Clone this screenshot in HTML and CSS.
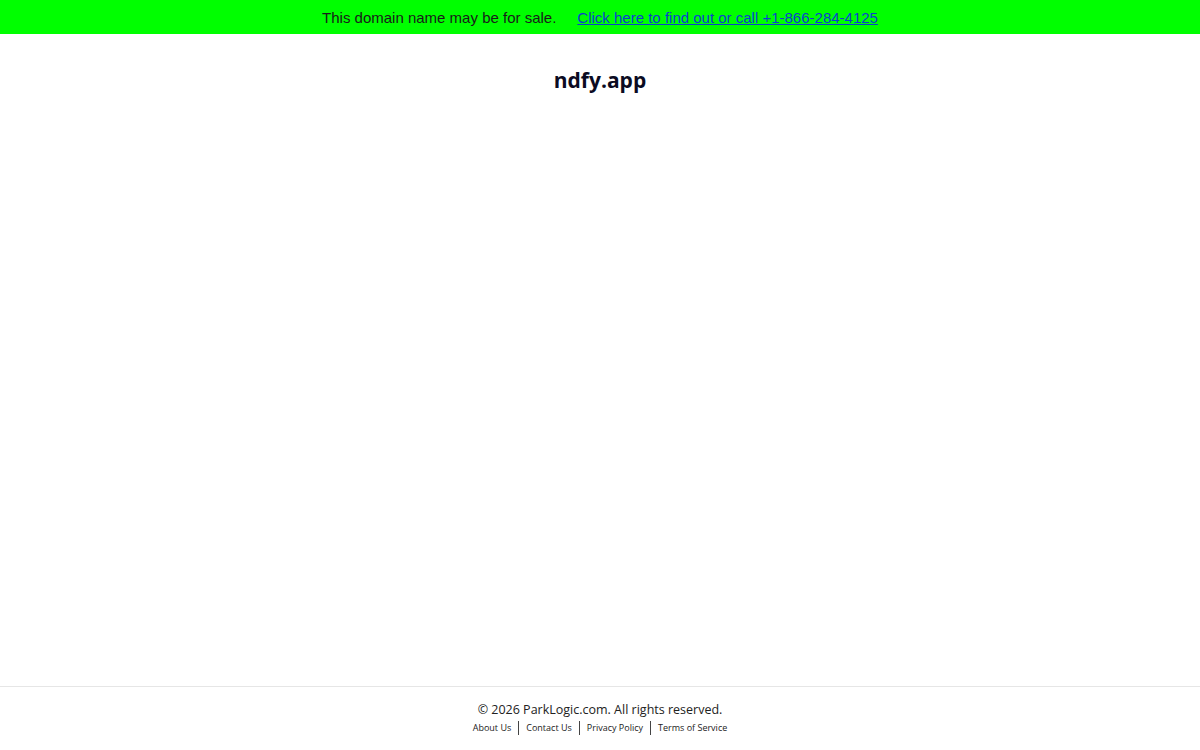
FILE: index.html
```html
<!DOCTYPE html>
<html lang="en">
<head>
<meta charset="utf-8">
<title>ndfy.app</title>
<link rel="stylesheet" href="styles.css">
</head>
<body>
<div class="page">
  <div class="sale-bar">
    <span class="sale-text">This domain name may be for sale.</span>
    <a class="sale-link" href="#">Click here to find out or call +1-866-284-4125</a>
  </div>
  <main class="content">
    <h1 class="domain">ndfy.app</h1>
  </main>
  <footer class="footer">
    <div class="copyright">© 2026 ParkLogic.com. All rights reserved.</div>
    <nav class="footer-links">
      <a href="#">About Us</a>
      <span class="sep"></span>
      <a href="#">Contact Us</a>
      <span class="sep"></span>
      <a href="#">Privacy Policy</a>
      <span class="sep"></span>
      <a href="#">Terms of Service</a>
    </nav>
  </footer>
</div>
</body>
</html>
```
FILE: styles.css
```css
html, body {
  margin: 0;
  padding: 0;
  background: #ffffff;
}
.page {
  display: flex;
  flex-direction: column;
  min-height: 750px;
}
.sale-bar {
  background: #00ff00;
  height: 34px;
  display: flex;
  align-items: center;
  justify-content: center;
  gap: 21px;
  font-family: "Liberation Sans", Arial, sans-serif;
  font-size: 15px;
  color: #1a1a1a;
}
.sale-link {
  color: #0b3fd0;
  text-decoration: underline;
}
.content {
  flex: 1;
  display: flex;
  justify-content: center;
}
.domain {
  margin: 32px 0 0;
  font-family: "Open Sans", sans-serif;
  font-weight: 700;
  font-size: 21px;
  line-height: 28px;
  color: #0b0b22;
}
.footer {
  border-top: 1px solid #e6e6e6;
  height: 64px;
  box-sizing: border-box;
  padding-top: 14px;
  display: flex;
  flex-direction: column;
  align-items: center;
  font-family: "Open Sans", sans-serif;
  color: #222;
}
.copyright {
  font-size: 12.5px;
  line-height: 18px;
}
.footer-links {
  display: flex;
  align-items: center;
  margin-top: 2px;
  font-size: 9px;
  line-height: 14px;
}
.footer-links a {
  color: #222;
  text-decoration: none;
}
.sep {
  width: 1px;
  height: 14px;
  background: #444;
  margin: 0 7px;
}
```
